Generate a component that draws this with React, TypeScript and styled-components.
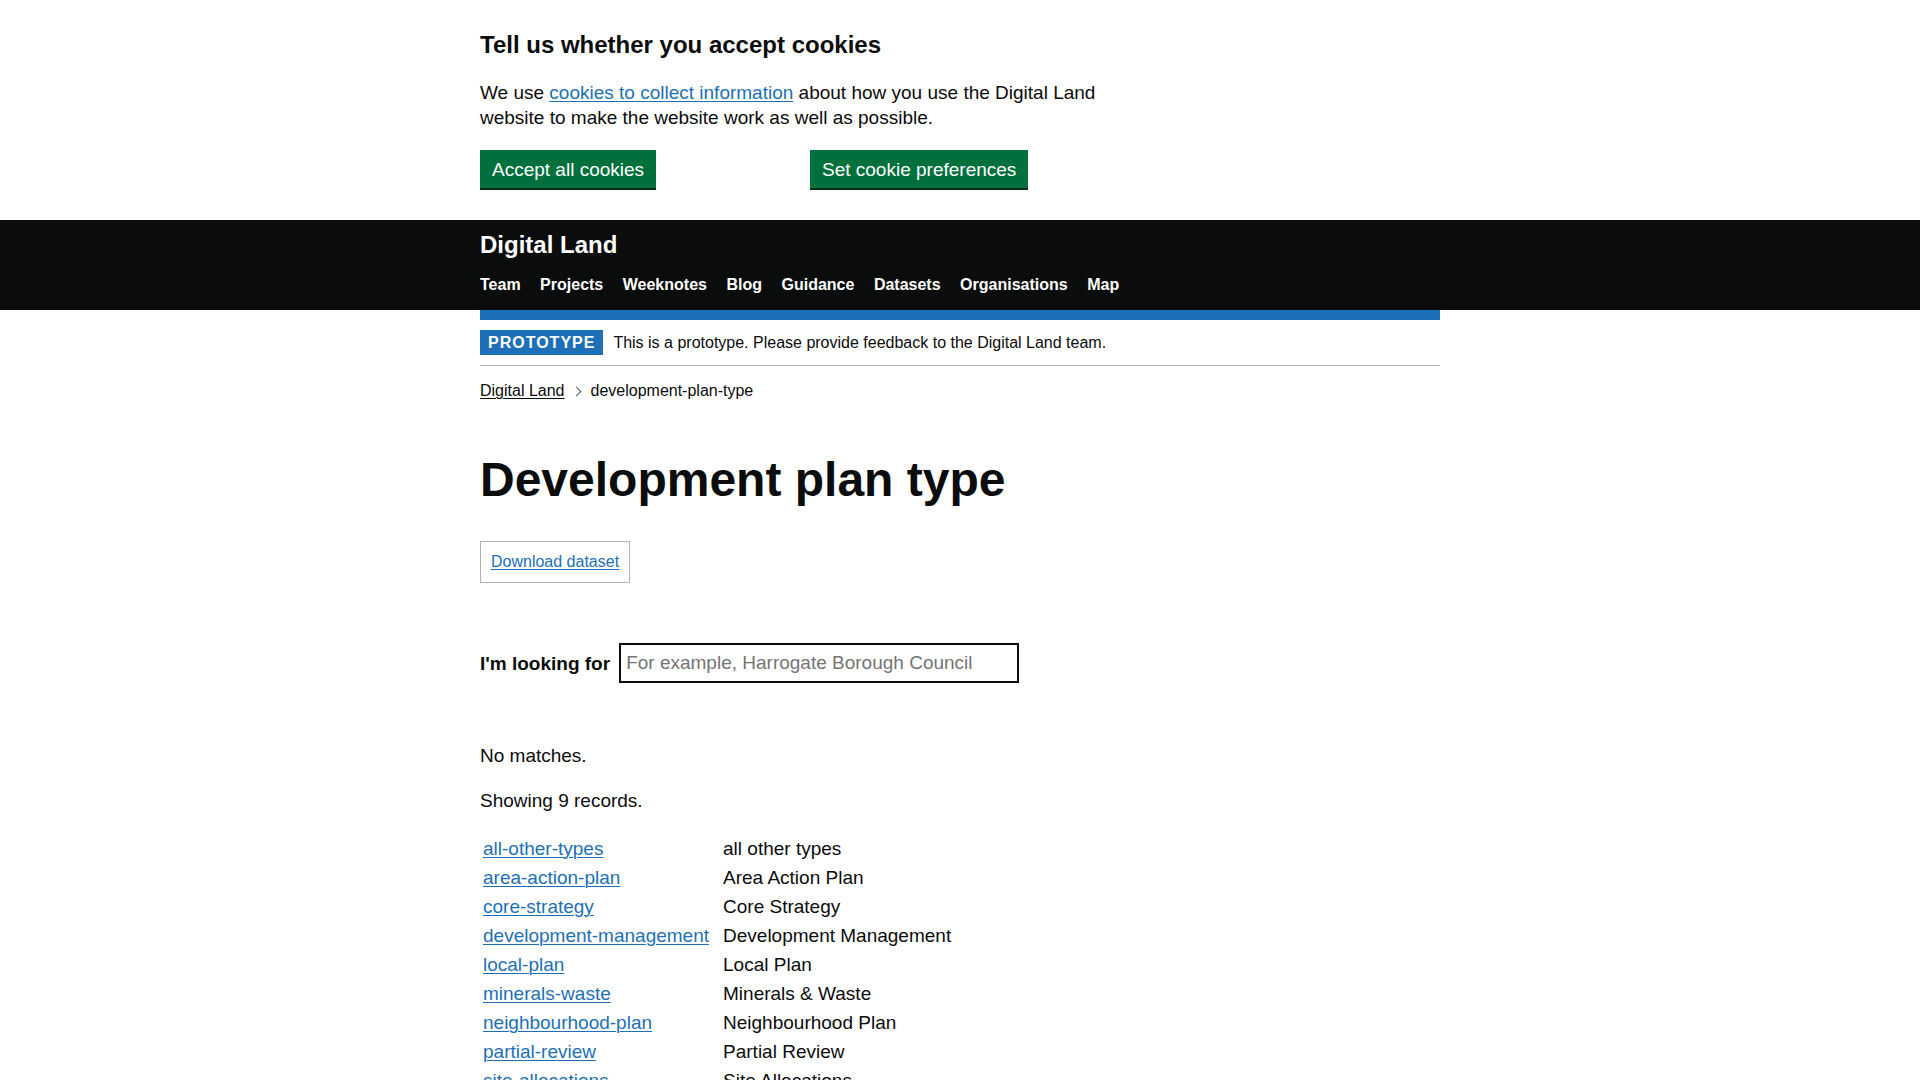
import React from 'react';
import styled, { createGlobalStyle } from 'styled-components';

const GlobalStyle = createGlobalStyle`
  html, body {
    margin: 0;
    padding: 0;
    background: #ffffff;
  }
  body {
    font-family: "Liberation Sans", Arial, sans-serif;
    color: #0b0c0c;
    -webkit-font-smoothing: antialiased;
  }
`;

const Container = styled.div`
  width: 960px;
  margin: 0 auto;
`;

const CookieBanner = styled.section`
  padding: 30px 0 30px;
`;

const CookieHeading = styled.h2`
  font-size: 24px;
  line-height: 30px;
  font-weight: 700;
  margin: 0 0 20px;
`;

const CookieText = styled.p`
  width: 630px;
  font-size: 19px;
  line-height: 25px;
  margin: 0 0 20px;
`;

const ButtonRow = styled.div`
  display: grid;
  grid-template-columns: repeat(3, 1fr);
  column-gap: 30px;
  align-items: start;
`;

const Button = styled.button`
  justify-self: start;
  font-family: inherit;
  font-size: 19px;
  line-height: 19px;
  color: #ffffff;
  background: #00703c;
  border: 2px solid transparent;
  border-radius: 0;
  box-shadow: 0 2px 0 #002d18;
  padding: 8px 10px 7px;
  margin: 0 0 2px;
  cursor: pointer;
`;

const Link = styled.a<{ $dark?: boolean }>`
  color: ${({ $dark }) => ($dark ? '#0b0c0c' : '#1d70b8')};
  text-decoration: underline;
  text-decoration-thickness: 1px;
  text-underline-offset: 0.1em;
`;

const Header = styled.header`
  background: #0b0c0c;
  color: #ffffff;
  padding: 10px 0 13.5px;
`;

const Brand = styled.div`
  font-size: 24px;
  line-height: 30px;
  font-weight: 700;
`;

const Nav = styled.nav`
  display: flex;
  gap: 19.5px;
  margin-top: 11.5px;
`;

const NavItem = styled.a`
  color: #ffffff;
  font-size: 16px;
  line-height: 25px;
  font-weight: 700;
  text-decoration: none;
`;

const BlueBar = styled.div`
  height: 10px;
  background: #1d70b8;
`;

const PhaseBanner = styled.div`
  display: flex;
  align-items: center;
  padding: 10px 0;
  border-bottom: 1px solid #b1b4b6;
`;

const Tag = styled.strong`
  display: inline-block;
  font-size: 16px;
  line-height: 16px;
  font-weight: 700;
  letter-spacing: 1px;
  text-transform: uppercase;
  color: #ffffff;
  background: #1d70b8;
  padding: 5px 8px 4px;
  margin-right: 10px;
`;

const PhaseText = styled.span`
  font-size: 16px;
  line-height: 20px;
`;

const Breadcrumbs = styled.ol`
  display: flex;
  align-items: center;
  list-style: none;
  margin: 15px 0 0;
  padding: 0;
  font-size: 16px;
  line-height: 20px;
`;

const Crumb = styled.li`
  display: flex;
  align-items: center;
`;

const Chevron = styled.span`
  display: inline-block;
  width: 6px;
  height: 6px;
  margin: 0 11px 0 8px;
  border-top: 1px solid #505a5f;
  border-right: 1px solid #505a5f;
  transform: rotate(45deg);
`;

const Main = styled.main`
  padding-top: 54px;
`;

const Title = styled.h1`
  font-size: 48px;
  line-height: 50px;
  font-weight: 700;
  margin: 0 0 36px;
`;

const DownloadBox = styled.div`
  display: inline-block;
  border: 1px solid #b1b4b6;
  padding: 10px;
  font-size: 16px;
  line-height: 20px;
`;

const SearchRow = styled.form`
  display: flex;
  align-items: center;
  gap: 9px;
  margin: 60px 0 59.5px;
`;

const Label = styled.label`
  font-size: 19px;
  line-height: 25px;
  font-weight: 700;
`;

const Input = styled.input`
  box-sizing: border-box;
  width: 400px;
  height: 40px;
  padding: 5px;
  border: 2px solid #0b0c0c;
  border-radius: 0;
  font-family: inherit;
  font-size: 19px;
  color: #0b0c0c;
  &::placeholder {
    color: #757575;
  }
`;

const Body = styled.p`
  font-size: 19px;
  line-height: 25px;
  margin: 0 0 20px;
`;

const Table = styled.table`
  font-size: 19px;
  line-height: 25px;
  margin-bottom: 40px;
`;

const Cell = styled.td<{ $first?: boolean }>`
  padding: 1px ${({ $first }) => ($first ? '11px' : '1px')} 1px 1px;
  vertical-align: top;
`;

const navItems = ['Team', 'Projects', 'Weeknotes', 'Blog', 'Guidance', 'Datasets', 'Organisations', 'Map'];

const records: [string, string][] = [
  ['all-other-types', 'all other types'],
  ['area-action-plan', 'Area Action Plan'],
  ['core-strategy', 'Core Strategy'],
  ['development-management', 'Development Management'],
  ['local-plan', 'Local Plan'],
  ['minerals-waste', 'Minerals & Waste'],
  ['neighbourhood-plan', 'Neighbourhood Plan'],
  ['partial-review', 'Partial Review'],
  ['site-allocations', 'Site Allocations'],
];

const App = () => {
  return (
    <>
      <GlobalStyle />
      <CookieBanner>
        <Container>
          <CookieHeading>Tell us whether you accept cookies</CookieHeading>
          <CookieText>
            We use <Link href="#">cookies to collect information</Link> about how you use the Digital
            Land website to make the website work as well as possible.
          </CookieText>
          <ButtonRow>
            <Button type="button">Accept all cookies</Button>
            <Button type="button">Set cookie preferences</Button>
          </ButtonRow>
        </Container>
      </CookieBanner>
      <Header>
        <Container>
          <Brand>Digital Land</Brand>
          <Nav>
            {navItems.map((item) => (
              <NavItem key={item} href="#">
                {item}
              </NavItem>
            ))}
          </Nav>
        </Container>
      </Header>
      <Container>
        <BlueBar />
        <PhaseBanner>
          <Tag>Prototype</Tag>
          <PhaseText>This is a prototype. Please provide feedback to the Digital Land team.</PhaseText>
        </PhaseBanner>
        <Breadcrumbs>
          <Crumb>
            <Link $dark href="#">Digital Land</Link>
            <Chevron />
          </Crumb>
          <Crumb>development-plan-type</Crumb>
        </Breadcrumbs>
        <Main>
          <Title>Development plan type</Title>
          <DownloadBox>
            <Link href="#">Download dataset</Link>
          </DownloadBox>
          <SearchRow onSubmit={(e) => e.preventDefault()}>
            <Label htmlFor="search">I'm looking for</Label>
            <Input id="search" placeholder="For example, Harrogate Borough Council" />
          </SearchRow>
          <Body>No matches.</Body>
          <Body>Showing 9 records.</Body>
          <Table>
            <tbody>
              {records.map(([slug, name]) => (
                <tr key={slug}>
                  <Cell $first>
                    <Link href="#">{slug}</Link>
                  </Cell>
                  <Cell>{name}</Cell>
                </tr>
              ))}
            </tbody>
          </Table>
        </Main>
      </Container>
    </>
  );
};

export default App;
